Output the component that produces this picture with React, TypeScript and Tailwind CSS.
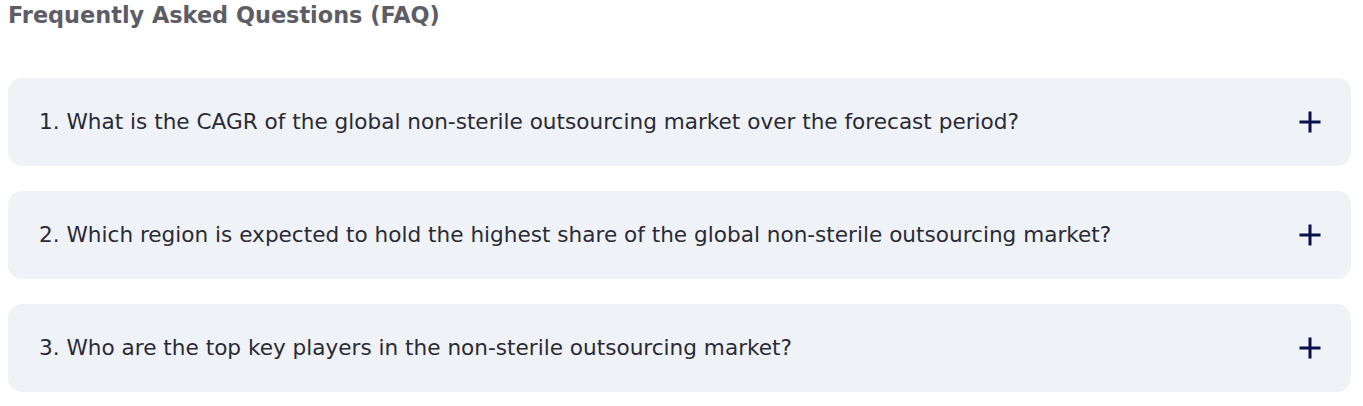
const faqs = [
  '1. What is the CAGR of the global non-sterile outsourcing market over the forecast period?',
  '2. Which region is expected to hold the highest share of the global non-sterile outsourcing market?',
  '3. Who are the top key players in the non-sterile outsourcing market?',
]

function PlusIcon() {
  return (
    <svg width="22" height="22" viewBox="0 0 22 22" className="text-[#0b0f4c]">
      <path d="M11 0.5v21M0.5 11h21" stroke="currentColor" strokeWidth="3" />
    </svg>
  )
}

export default function App() {
  return (
    <div className="w-[1363px] bg-white pr-3 pb-4 pl-2 font-['DejaVu_Sans',sans-serif]">
      <h2 className="text-[22.4px] leading-[30px] font-bold text-[#5e5d66]">Frequently Asked Questions (FAQ)</h2>
      <div className="mt-[48px] flex flex-col gap-[25px]">
        {faqs.map((q) => (
          <div key={q} className="flex h-[88px] items-center justify-between rounded-[14px] bg-[#eff2f7] pr-[30px] pl-[31px]">
            <p className="text-[21.6px] text-[#2b2a35]">{q}</p>
            <PlusIcon />
          </div>
        ))}
      </div>
    </div>
  )
}
